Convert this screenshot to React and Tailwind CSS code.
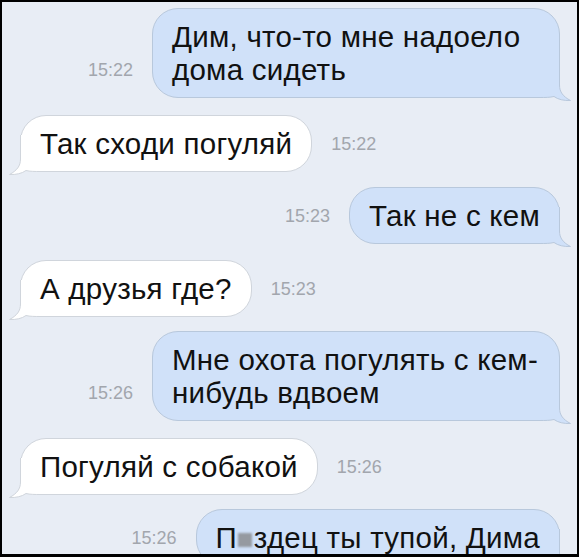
import React from "react";

const FONT = { fontFamily: '"Liberation Sans", Arial, sans-serif' };

function Tail({ side }) {
  const stroke =
    "M 28.5 0 L 28.5 24 C 28.5 31, 32 35.5, 39.5 39.5 C 33 39.8, 27 38.5, 23 35.5 C 19 36.5, 14 36.5, 9 36.5 L 0 36.5";
  const fill = stroke + " L 0 0 Z";
  const out = side === "out";
  return (
    <svg
      width="40"
      height="40"
      viewBox="0 0 40 40"
      className={
        out
          ? "absolute right-[-12px] bottom-[-4px]"
          : "absolute left-[-12px] bottom-[-4px]"
      }
    >
      <g transform={out ? undefined : "translate(40,0) scale(-1,1)"}>
        <path d={fill} fill={out ? "#d0e1f9" : "#ffffff"} stroke="none" />
        <path
          d={stroke}
          fill="none"
          stroke={out ? "#b8c8dc" : "#d0d5dc"}
          strokeWidth="1"
        />
      </g>
    </svg>
  );
}

function Time({ children }) {
  return (
    <span className="text-[18px] leading-5 text-[#a2a6ad] whitespace-nowrap mb-[18px]">
      {children}
    </span>
  );
}

function Out({ time, children, className = "" }) {
  return (
    <div className={"flex items-end justify-end gap-[19px] " + className}>
      <Time>{time}</Time>
      <div className="relative rounded-[26px] border border-[#b8c8dc] bg-[#d0e1f9] px-[19px] py-[11px]">
        <Tail side="out" />
        <div className="relative text-[29.5px] leading-[33px] tracking-[0.25px] text-[#111]">
          {children}
        </div>
      </div>
    </div>
  );
}

function In({ time, children, className = "" }) {
  return (
    <div className={"flex items-end justify-start gap-[19px] " + className}>
      <div className="relative rounded-[26px] border border-[#d0d5dc] bg-white px-[19px] py-[11px]">
        <Tail side="in" />
        <div className="relative text-[29.5px] leading-[33px] tracking-[0.25px] text-[#111] whitespace-nowrap">
          {children}
        </div>
      </div>
      <Time>{time}</Time>
    </div>
  );
}

export default function App() {
  return (
    <div
      style={FONT}
      className="w-[579px] h-[557px] overflow-hidden border-2 border-b-[3px] border-black bg-[#e8edf5]"
    >
      <div className="flex flex-col pt-[6px] pl-[18px] pr-[17px]">
        <Out time="15:22">
          <div className="w-[368px]">
            Дим, что-то мне надоело
            <br />
            дома сидеть
          </div>
        </Out>
        <In time="15:22" className="mt-[17px]">
          Так сходи погуляй
        </In>
        <Out time="15:23" className="mt-[15px]">
          Так не с кем
        </Out>
        <In time="15:23" className="mt-[16px]">
          А друзья где?
        </In>
        <Out time="15:26" className="mt-[14px]">
          <div className="w-[368px]">
            Мне охота погулять с кем-
            <br />
            нибудь вдвоем
          </div>
        </Out>
        <In time="15:26" className="mt-[17px]">
          Погуляй с собакой
        </In>
        <Out time="15:26" className="mt-[14px]">
          <span className="whitespace-nowrap">
            П
            <span className="relative inline-block">
              <span className="text-transparent">и</span>
              <span className="absolute left-[1px] right-[2px] bottom-[7px] h-[14px] bg-[#959aa1] blur-[1px]" />
            </span>
            здец ты тупой, Дима
          </span>
        </Out>
      </div>
    </div>
  );
}
